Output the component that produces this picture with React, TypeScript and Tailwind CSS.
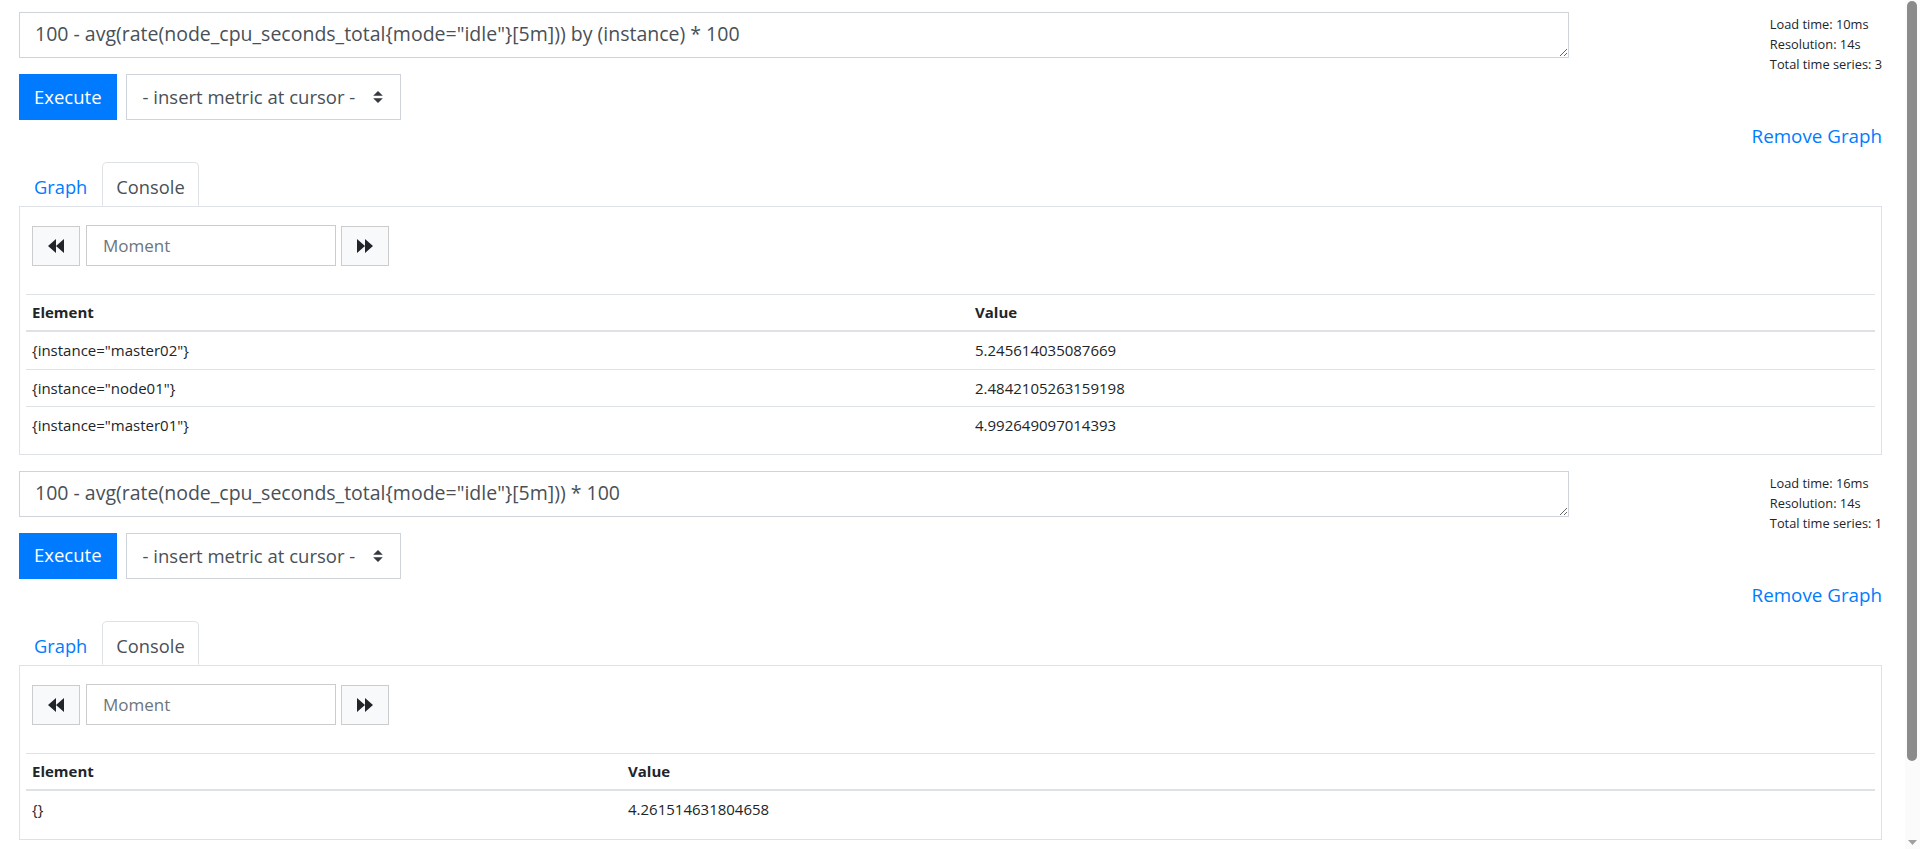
import React from "react";

type Row = { element: string; value: string };

type PanelProps = {
  query: string;
  loadTime: string;
  total: number;
  rows: Row[];
  elementCol: string;
};

const BackIcon = () => (
  <svg width="16" height="14" viewBox="0 0 16 14">
    <path d="M0 7L8 0v14zM8 7l8-7v14z" fill="#212529" />
  </svg>
);

const FwdIcon = () => (
  <svg width="16" height="14" viewBox="0 0 16 14">
    <path d="M16 7L8 0v14zM8 7L0 0v14z" fill="#212529" />
  </svg>
);

//NOTE - 쿼리 패널 하나
const QueryPanel = ({ query, loadTime, total, rows, elementCol }: PanelProps) => {
  return (
    <div className="pt-[12px] pb-[4px]">
      <div className="flex">
        <div className="w-[1550px] shrink-0">
          <textarea
            defaultValue={query}
            rows={1}
            className="block w-full h-[46px] border border-[#ced4da] bg-white px-[15px] py-[7px] text-[19.5px] leading-[28.8px] text-[#495057] outline-none"
          />
          <div className="flex mt-[16px]">
            <button className="h-[46px] px-[14px] bg-[#007bff] border border-[#007bff] text-white text-[18.5px] leading-[28.8px]">
              Execute
            </button>
            <div className="ml-[9px] h-[46px] w-[275px] border border-[#ced4da] bg-white flex items-center justify-between pl-[16px] pr-[17px] text-[18.5px] text-[#495057]">
              <span>- insert metric at cursor -</span>
              <svg width="10" height="12" viewBox="0 0 4 5">
                <path d="M2 0L0 2h4zm0 5L0 3h4z" fill="#343a40" />
              </svg>
            </div>
          </div>
        </div>
        <div className="flex-1 flex justify-end pt-[2px]">
          <div className="text-[12.8px] leading-[20px] text-[#212529]">
            <div>Load time: {loadTime}</div>
            <div>Resolution: 14s</div>
            <div>Total time series: {total}</div>
          </div>
        </div>
      </div>

      <div className="mt-[2px] text-right text-[18.8px] leading-[28.8px] text-[#007bff]">Remove Graph</div>

      <div className="mt-[11px] flex text-[18.3px] leading-[28.8px]">
        <div className="h-[44px] px-[14px] pt-[7px] flex items-center border border-transparent text-[#007bff]">Graph</div>
        <div className="relative z-10 -mb-px h-[44px] px-[13px] pt-[7px] flex items-center border border-[#dee2e6] border-b-white rounded-t-[5px] bg-white text-[#495057]">
          Console
        </div>
      </div>

      <div className="border border-[#dee2e6] px-[6px] pt-[18px] pb-[11px]">
        <div className="ml-[6px] h-[42px] flex items-center">
          <button className="w-[48px] h-[40px] border border-[#cccccc] bg-[#f8f9fa] flex items-center justify-center">
            <BackIcon />
          </button>
          <input
            placeholder="Moment"
            className="ml-[6px] w-[250px] h-[41px] border border-[#cccccc] bg-white px-[16px] text-[17px] text-[#495057] placeholder:text-[#6c757d] outline-none"
          />
          <button className="ml-[5px] w-[48px] h-[40px] border border-[#cccccc] bg-[#f8f9fa] flex items-center justify-center">
            <FwdIcon />
          </button>
        </div>

        <div className="mt-[27px] text-[15px] text-[#212529]">
          <div className="flex items-center h-[38px] border-t border-b-2 border-[#dee2e6] font-bold">
            <div className={`${elementCol} px-[6px]`}>Element</div>
            <div className="px-[6px]">Value</div>
          </div>
          {rows.map((row, i) => (
            <div
              key={row.element}
              className={i === 0 ? "flex items-center h-[37px]" : "flex items-center h-[37px] border-t border-[#dee2e6]"}
            >
              <div className={`${elementCol} px-[6px]`}>{row.element}</div>
              <div className="px-[6px]">{row.value}</div>
            </div>
          ))}
        </div>
      </div>
    </div>
  );
};

const App = () => {
  return (
    <div className="relative h-[849px] overflow-hidden bg-white font-[family-name:'Open_Sans','Liberation_Sans',sans-serif]">
      <div className="pl-[19px] pr-[38px]">
        <QueryPanel
          query={'100 - avg(rate(node_cpu_seconds_total{mode="idle"}[5m])) by (instance) * 100'}
          loadTime="10ms"
          total={3}
          elementCol="w-[943px] shrink-0"
          rows={[
            { element: '{instance="master02"}', value: "5.245614035087669" },
            { element: '{instance="node01"}', value: "2.4842105263159198" },
            { element: '{instance="master01"}', value: "4.992649097014393" },
          ]}
        />
        <QueryPanel
          query={'100 - avg(rate(node_cpu_seconds_total{mode="idle"}[5m])) * 100'}
          loadTime="16ms"
          total={1}
          elementCol="w-[596px] shrink-0"
          rows={[{ element: "{}", value: "4.261514631804658" }]}
        />
      </div>

      {/* scrollbar */}
      <div className="absolute right-0 top-0 w-[15px] h-[849px] bg-[#fbfbfb]">
        <div className="absolute left-[2px] top-[1px] w-[10px] h-[760px] rounded-full bg-[#8b8b8b]" />
        <svg className="absolute left-[3px] bottom-[4px]" width="9" height="5" viewBox="0 0 9 5">
          <path d="M0 0h9L4.5 5z" fill="#a0a0a0" />
        </svg>
      </div>
    </div>
  );
};

export default App;
